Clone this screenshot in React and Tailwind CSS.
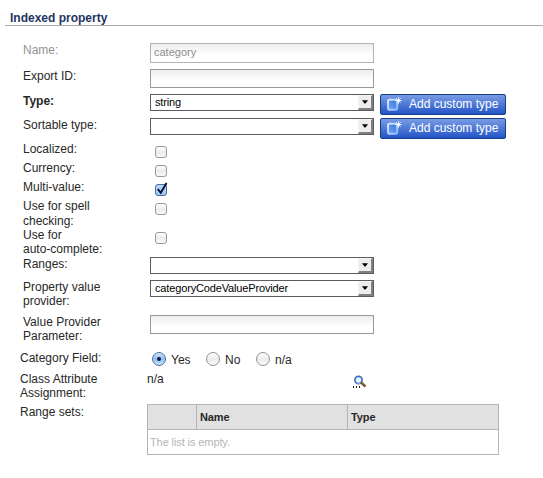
import React from "react";

function Row({ className, label, labelClass = "", children }) {
  return (
    <div className={`flex shrink-0 items-start ${className}`}>
      <div className={`w-[127px] shrink-0 whitespace-pre-line ${labelClass}`}>{label}</div>
      {children}
    </div>
  );
}

function TextInput({ className = "h-[19px] border-[#999]", value = "" }) {
  return (
    <input
      readOnly
      defaultValue={value}
      className={`block w-[224px] border bg-linear-to-b from-[#ececec] to-white to-60% px-[3px] pb-0.5 text-[11px] leading-4 text-[#8c8c8c] outline-none ${className}`}
    />
  );
}

function Select({ value = "" }) {
  return (
    <div className="flex h-[17px] w-[224px] items-stretch justify-between border border-[#5c5c60] bg-white">
      <span className="pl-1 text-[11px] leading-[15px] tracking-[-0.15px] text-black">{value}</span>
      <span className="flex w-[15px] items-start justify-center border-t border-l border-r-2 border-b-2 border-t-[#f4f4f4] border-r-[#808080] border-b-[#808080] border-l-[#f4f4f4] bg-[#ededed] pt-1">
        <svg width="6" height="4" viewBox="0 0 6 4">
          <path d="M0 0.200h6L3.500 3.500h-1z" fill="#000" />
        </svg>
      </span>
    </div>
  );
}

function AddButton() {
  return (
    <button className="ml-1.5 flex h-[21px] w-[126px] items-start rounded-[2px] border border-[#123f85] bg-linear-to-b from-[#789be4] to-[#2454c6] pt-0.5 pl-1.5 text-white">
      <svg width="16" height="15" viewBox="0 0 16 15" fill="none">
        <defs>
          <linearGradient id="page" x1="0" y1="1" x2="1" y2="0">
            <stop offset="0" stopColor="#6ea9fa" />
            <stop offset="1" stopColor="#3a6fdc" />
          </linearGradient>
          <linearGradient id="edge" x1="0" y1="0" x2="1" y2="1">
            <stop offset="0" stopColor="#d5ebff" />
            <stop offset="1" stopColor="#86bbfb" />
          </linearGradient>
        </defs>
        <rect x="1" y="2.800" width="9.200" height="10" rx="1.500" fill="url(#page)" stroke="url(#edge)" strokeWidth="2" />
        <path d="M11.500 0.300v6.400M8.300 3.500h6.400M9.400 1.400l4.200 4.200M13.600 1.400l-4.200 4.200" stroke="#f2f8ff" strokeWidth="0.950" />
      </svg>
      <span className="ml-[6px] text-[12px] leading-[14px] whitespace-nowrap">Add custom type</span>
    </button>
  );
}

function Checkbox({ checked = false }) {
  return (
    <span
      className={`mt-1 ml-[5px] block h-3 w-3 rounded-[3px] border ${
        checked
          ? "border-[#4b6fa5] bg-linear-to-b from-[#b9d8f7] to-[#9dcaf7]"
          : "border-[#999] bg-linear-to-b from-white via-[#ececec] to-[#fafafa]"
      }`}
    >
      {checked && (
        <svg width="12" height="13" viewBox="0 0 12 13" className="-mt-[3px] block overflow-visible" fill="none">
          <path d="M1.800 7l3 3.800L10.500 1" stroke="#0a1030" strokeWidth="2" />
        </svg>
      )}
    </span>
  );
}

function Radio({ checked = false, label, className }) {
  return (
    <span className={`flex items-start ${className}`}>
      <span
        className={`mt-px flex h-[14px] w-[14px] shrink-0 items-center justify-center rounded-full border ${
          checked
            ? "border-[#4d6f9f] bg-linear-to-b from-[#cfe3f8] via-[#8fbdf0] to-[#c4e8ff]"
            : "border-[#909090] bg-linear-to-b from-white via-[#ececec] to-[#fafafa]"
        }`}
      >
        {checked && <span className="h-1 w-1 rounded-full bg-[#0a1738]" />}
      </span>
      <span className="mt-0.5 ml-[5px]">{label}</span>
    </span>
  );
}

function SearchIcon() {
  return (
    <svg width="14" height="14" viewBox="0 0 14 14" fill="none">
      <circle cx="5.500" cy="5" r="3.600" fill="#eef5ff" stroke="#3f70be" strokeWidth="1.700" />
      <path d="M3.500 8l4 .400" stroke="#8fb9ec" strokeWidth="1" />
      <path d="M8.300 7.700l4.200 3.800" stroke="#5f4210" strokeWidth="2.400" />
      <path d="M8.600 7.400l4 3.600" stroke="#b98a3a" strokeWidth="1" />
      <path d="M0 11h1v2h-1zM3 11h1v2h-1zM6 11h1v2h-1z" fill="#222" />
    </svg>
  );
}

export default function App() {
  return (
    <main className="flex h-[478px] w-[543px] flex-col overflow-hidden bg-white font-['Liberation_Sans',Arial,sans-serif] text-[12px] leading-[14px] text-[#282828]">
      <h1 className="ml-[5px] h-[26px] shrink-0 border-b border-[#aaa] pt-[11px] pl-[5px] text-[12px] leading-[14px] font-bold text-[#1d3461]">
        Indexed property
      </h1>

      <div className="flex flex-col pt-[17px] pl-[23px]">
        <Row className="h-[26px]" labelClass="text-[#949494]" label="Name:">
          <TextInput className="h-5 border-[#b4b4b4]" value="category" />
        </Row>
        <Row className="h-[25px]" label="Export ID:">
          <TextInput />
        </Row>
        <Row className="h-6" labelClass="font-bold" label="Type:">
          <Select value="string" />
          <AddButton />
        </Row>
        <Row className="h-6" label="Sortable type:">
          <Select />
          <AddButton />
        </Row>
        <Row className="h-[19px]" label="Localized:">
          <Checkbox />
        </Row>
        <Row className="h-[19px]" label="Currency:">
          <Checkbox />
        </Row>
        <Row className="h-[19px]" label="Multi-value:">
          <Checkbox checked />
        </Row>
        <Row className="h-[29px]" labelClass="leading-[15px]" label={"Use for spell\nchecking:"}>
          <Checkbox />
        </Row>
        <Row className="h-[29px]" label={"Use for\nauto-complete:"}>
          <Checkbox />
        </Row>
        <Row className="h-[23px]" label="Ranges:">
          <Select />
        </Row>
        <Row className="h-[35px]" label={"Property value\nprovider:"}>
          <Select value="categoryCodeValueProvider" />
        </Row>
        <Row className="h-[36px]" label={"Value Provider\nParameter:"}>
          <TextInput />
        </Row>
      </div>

      <div className="flex flex-col pl-5">
        <Row className="h-[21px]" label="Category Field:">
          <Radio checked label="Yes" className="ml-[5px] w-[54px]" />
          <Radio label="No" className="w-[50px]" />
          <Radio label="n/a" className="" />
        </Row>
        <Row className="h-8" label={"Class Attribute\nAssignment:"}>
          <span className="w-[206px]">n/a</span>
          <span className="mt-[3px]">
            <SearchIcon />
          </span>
        </Row>
        <Row className="-mt-px h-[60px] pt-px" labelClass="pt-px" label="Range sets:">
          <table className="w-[352px] table-fixed border-collapse text-left text-[11px] leading-[13px] tracking-[-0.1px]">
            <colgroup>
              <col className="w-[49px]" />
              <col className="w-[151px]" />
              <col />
            </colgroup>
            <thead>
              <tr className="h-[25px] bg-[#e1e1e1]">
                <th className="border border-[#b5b5b5]" />
                <th className="border border-[#b5b5b5] px-[3px] py-0">Name</th>
                <th className="border border-[#b5b5b5] px-[3px] py-0">Type</th>
              </tr>
            </thead>
            <tbody>
              <tr className="h-[25px]">
                <td colSpan={3} className="border border-[#b5b5b5] px-[2px] py-0 text-[#b5b5b5]">
                  The list is empty.
                </td>
              </tr>
            </tbody>
          </table>
        </Row>
      </div>
    </main>
  );
}
